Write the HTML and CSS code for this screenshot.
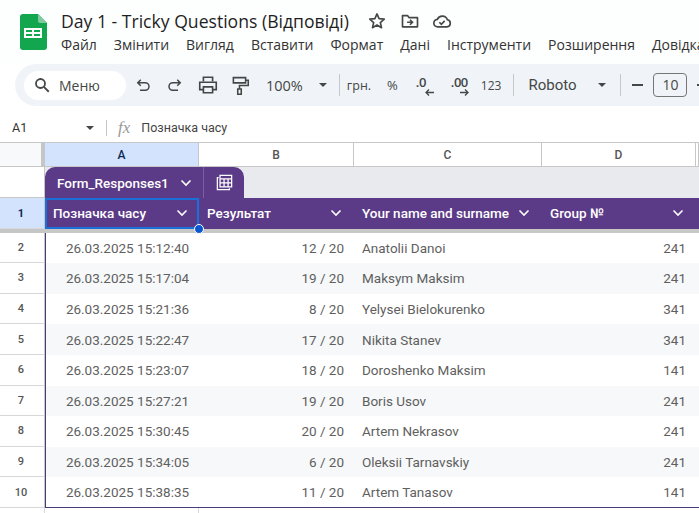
FILE: index.html
```html
<!DOCTYPE HTML>
<html lang="en">
<head>
    <title>Day 1 - Tricky Questions</title>
    <meta charset="utf-8">
    <link rel="stylesheet" href="styles.css">
</head>
<body>

<div class="top">
    <svg class="logo" width="27" height="36" viewBox="0 0 27 36">
        <path d="M3 0H18L27 9V33a3 3 0 0 1-3 3H3a3 3 0 0 1-3-3V3a3 3 0 0 1 3-3z" fill="#12a64f"/>
        <path d="M18 0L27 9H20a2 2 0 0 1-2-2z" fill="#7fcb9d"/>
        <path d="M4 14H22V24H4z M6 16V18H12V16z M14 16V18H20V16z M6 20V22H12V20z M14 20V22H20V20z" fill="#fff" fill-rule="evenodd"/>
    </svg>
    <div class="titles">
        <div class="title-row">
            <span class="doc-title">Day 1 - Tricky Questions (Відповіді)</span>
            <svg class="ti" width="20" height="20" viewBox="0 0 24 24"><path d="M12 3.500l2.500 5.700 6.200.6-4.700 4.100 1.400 6.100L12 16.800 6.600 20l1.400-6.100-4.700-4.100 6.200-.6z" fill="none" stroke="#444746" stroke-width="2" stroke-linejoin="round"/></svg>
            <svg class="ti folder" width="20" height="20" viewBox="0 0 24 24"><path d="M3 5.500h6l2 2.500h10v11H3z" fill="none" stroke="#444746" stroke-width="2" stroke-linejoin="round"/><path d="M8.500 13.500h6.500M12 10.500l3 3-3 3" fill="none" stroke="#444746" stroke-width="2"/></svg>
            <svg class="ti cloud" width="20" height="20" viewBox="0 0 24 24"><path d="M7 19a4.500 4.500 0 0 1-.6-9A6.500 6.500 0 0 1 18.500 10.500 4.300 4.300 0 0 1 18 19z" fill="none" stroke="#444746" stroke-width="2"/><path d="M8.800 13.500l2.400 2.400 4-4" fill="none" stroke="#444746" stroke-width="2"/></svg>
        </div>
        <div class="menu">
            <span>Файл</span><span>Змінити</span><span>Вигляд</span><span>Вставити</span><span>Формат</span><span>Дані</span><span>Інструменти</span><span>Розширення</span><span>Довідка</span>
        </div>
    </div>
</div>

<div class="toolbar">
    <div class="search">
        <svg width="18" height="18" viewBox="0 0 24 24"><circle cx="10" cy="10" r="6" fill="none" stroke="#444746" stroke-width="2.400"/><path d="M14.500 14.500L21 21" stroke="#444746" stroke-width="2.400"/></svg>
        <span>Меню</span>
    </div>
    <svg class="tool undo" width="18" height="18" viewBox="0 0 24 24"><path d="M9 5L5 9l4 4M5 9h10a4.500 4.500 0 0 1 0 10H8" fill="none" stroke="#444746" stroke-width="2"/></svg>
    <svg class="tool" width="18" height="18" viewBox="0 0 24 24"><path d="M15 5l4 4-4 4M19 9H9a4.500 4.500 0 0 0 0 10h7" fill="none" stroke="#444746" stroke-width="2"/></svg>
    <svg class="tool print" width="22" height="22" viewBox="0 0 24 24"><path d="M7 8V3.500h10V8M7 17H3V9h18v8h-4M7 14h10v6.500H7z" fill="none" stroke="#444746" stroke-width="1.800"/></svg>
    <svg class="tool paint" width="21" height="21" viewBox="0 0 24 24"><path d="M5 3h14v6H5zM19 6h3v6H12v4M10 16h4v6h-4z" fill="none" stroke="#444746" stroke-width="1.800"/></svg>
    <span class="zoom-val">100%</span>
    <span class="caret zoom-caret"></span>
    <span class="sep"></span>
    <span class="t-small grn">грн.</span>
    <span class="t-small pct">%</span>
    <span class="dec">.0<svg width="9" height="7" viewBox="0 0 9 7"><path d="M9 3.500H1M4 .5L1 3.500l3 3" fill="none" stroke="#444746" stroke-width="1.300"/></svg></span>
    <span class="dec inc">.00<svg width="9" height="7" viewBox="0 0 9 7"><path d="M0 3.500H8M5 .5l3 3-3 3" fill="none" stroke="#444746" stroke-width="1.300"/></svg></span>
    <span class="t-small num">123</span>
    <span class="sep"></span>
    <span class="font-name">Roboto</span>
    <span class="caret"></span>
    <span class="sep sep-wide"></span>
    <span class="minus"></span>
    <span class="size">10</span>
    <span class="minus plus"></span>
</div>

<div class="formula">
    <span class="cell-ref">A1</span>
    <span class="caret"></span>
    <span class="sep"></span>
    <span class="fx">fx</span>
    <span class="formula-text">Позначка часу</span>
</div>

<div class="sheet">
    <div class="col-head corner"></div>
    <div class="col-head active">A</div>
    <div class="col-head">B</div>
    <div class="col-head">C</div>
    <div class="col-head">D</div>
    <div class="col-head"></div>

    <div class="row-num blank"></div>
    <div class="tab-row">
        <div class="tab">
            <span class="tab-name">Form_Responses1</span>
            <svg class="chev" width="12" height="8" viewBox="0 0 12 8"><path d="M1.500 1.500L6 6l4.500-4.500" fill="none" stroke="#fff" stroke-width="1.600"/></svg>
            <span class="tab-line"></span>
            <svg width="17" height="17" viewBox="0 0 19 19"><path d="M3 4H1.500v13.500H15V16" fill="none" stroke="#fff" stroke-width="1.400"/><path d="M4.500 1.500h13v13h-13zM4.500 5.500h13M9 5.500v9M13.500 5.500v9M4.500 10h13" fill="none" stroke="#fff" stroke-width="1.400"/></svg>
        </div>
    </div>

    <div class="row-num active head-num">1</div>
    <div class="hcell selected"><span>Позначка часу</span><svg class="chev" width="12" height="8" viewBox="0 0 12 8"><path d="M1.500 1.500L6 6l4.500-4.500" fill="none" stroke="#fff" stroke-width="1.600"/></svg><i class="handle"></i></div>
    <div class="hcell"><span>Результат</span><svg class="chev" width="12" height="8" viewBox="0 0 12 8"><path d="M1.500 1.500L6 6l4.500-4.500" fill="none" stroke="#fff" stroke-width="1.600"/></svg></div>
    <div class="hcell"><span>Your name and surname</span><svg class="chev" width="12" height="8" viewBox="0 0 12 8"><path d="M1.500 1.500L6 6l4.500-4.500" fill="none" stroke="#fff" stroke-width="1.600"/></svg></div>
    <div class="hcell"><span>Group №</span><svg class="chev" width="12" height="8" viewBox="0 0 12 8"><path d="M1.500 1.500L6 6l4.500-4.500" fill="none" stroke="#fff" stroke-width="1.600"/></svg></div>
    <div class="hcell end"></div>

    <div class="row-num gap"></div>
    <div class="band"></div>

    <div class="row-num">2</div><div class="c t first">26.03.2025 15:12:40</div><div class="c r">12 / 20</div><div class="c n">Anatolii Danoi</div><div class="c r">241</div><div class="c e"></div>
    <div class="row-num">3</div><div class="c t first alt">26.03.2025 15:17:04</div><div class="c r alt">19 / 20</div><div class="c n alt">Maksym Maksim</div><div class="c r alt">241</div><div class="c e alt"></div>
    <div class="row-num">4</div><div class="c t first">26.03.2025 15:21:36</div><div class="c r">8 / 20</div><div class="c n">Yelysei Bielokurenko</div><div class="c r">341</div><div class="c e"></div>
    <div class="row-num">5</div><div class="c t first alt">26.03.2025 15:22:47</div><div class="c r alt">17 / 20</div><div class="c n alt">Nikita Stanev</div><div class="c r alt">341</div><div class="c e alt"></div>
    <div class="row-num">6</div><div class="c t first">26.03.2025 15:23:07</div><div class="c r">18 / 20</div><div class="c n">Doroshenko Maksim</div><div class="c r">141</div><div class="c e"></div>
    <div class="row-num">7</div><div class="c t first alt">26.03.2025 15:27:21</div><div class="c r alt">19 / 20</div><div class="c n alt">Boris Usov</div><div class="c r alt">241</div><div class="c e alt"></div>
    <div class="row-num">8</div><div class="c t first">26.03.2025 15:30:45</div><div class="c r">20 / 20</div><div class="c n">Artem Nekrasov</div><div class="c r">241</div><div class="c e"></div>
    <div class="row-num">9</div><div class="c t first alt">26.03.2025 15:34:05</div><div class="c r alt">6 / 20</div><div class="c n alt">Oleksii Tarnavskiy</div><div class="c r alt">241</div><div class="c e alt"></div>
    <div class="row-num">10</div><div class="c t first last">26.03.2025 15:38:35</div><div class="c r last">11 / 20</div><div class="c n last">Artem Tanasov</div><div class="c r last">141</div><div class="c e last"></div>

    <div class="tail"></div><div class="tail"></div>
</div>

</body>
</html>
```

FILE: styles.css
```css
html {
    height: 100%;
}
body {
    margin: 0;
    padding: 0;
    height: 513px;
    overflow: hidden;
    background: #fff;
    color: #444;
    font-family: "Roboto", sans-serif;
    font-size: 13px;
}

.top {
    display: flex;
    height: 64px;
    padding-left: 20px;
    box-sizing: border-box;
    background: #fdfefe;
    white-space: nowrap;
}
.logo {
    flex: none;
    margin-top: 14px;
}
.titles {
    flex: none;
    margin-left: 14px;
    padding-top: 8px;
}
.title-row {
    display: flex;
    align-items: center;
    height: 26px;
}
.doc-title {
    font-family: "Open Sans", sans-serif;
    font-size: 17.600px;
    color: #1f1f1f;
    margin-right: 8px;
}
.ti {
    margin-left: 10px;
}
.ti.folder {
    margin-left: 13px;
}
.ti.cloud {
    margin-left: 12px;
}
.menu {
    display: flex;
    gap: 17px;
    margin-top: 1px;
    font-family: "Open Sans", sans-serif;
    font-size: 14px;
    line-height: 20px;
    color: #333;
}

.toolbar {
    display: flex;
    align-items: center;
    height: 42px;
    margin-left: 15px;
    padding-left: 9px;
    overflow: hidden;
    background: #f0f4f9;
    border-radius: 21px 0 0 21px;
    white-space: nowrap;
    font-family: "Open Sans", sans-serif;
    color: #444746;
}
.search {
    display: flex;
    flex: none;
    align-items: center;
    width: 102px;
    height: 29px;
    box-sizing: border-box;
    padding-left: 9px;
    gap: 8px;
    background: #fff;
    border-radius: 15px;
    font-size: 14px;
}
.tool {
    flex: none;
    margin-left: 14px;
}
.tool.undo {
    margin-left: 8px;
}
.tool.print {
    margin-left: 13px;
}
.tool.paint {
    margin-left: 10px;
}
.zoom-val {
    margin-left: 16px;
    font-size: 14.500px;
}
.caret {
    flex: none;
    width: 0;
    height: 0;
    margin-left: 10px;
    border-left: 4.500px solid transparent;
    border-right: 4.500px solid transparent;
    border-top: 4.500px solid #444746;
}
.zoom-caret {
    margin-left: 16px;
}
.sep {
    flex: none;
    width: 1px;
    height: 22px;
    margin-left: 12px;
    background: #c7c7c7;
}
.sep-wide {
    margin-left: 14px;
}
.t-small {
    font-size: 12.500px;
}
.grn {
    margin-left: 7px;
}
.pct {
    margin-left: 16px;
    font-size: 13px;
}
.dec {
    position: relative;
    flex: none;
    width: 24px;
    margin-left: 18px;
    font-size: 13px;
    font-weight: 600;
    line-height: 16px;
    padding-bottom: 6px;
    letter-spacing: -.5px;
}
.dec svg {
    position: absolute;
    left: 9px;
    bottom: 0;
}
.inc {
    margin-left: 11px;
}
.num {
    margin-left: 6px;
    font-size: 12px;
}
.font-name {
    flex: none;
    width: 60px;
    margin-left: 14px;
    font-family: "Roboto", sans-serif;
    font-size: 15px;
}
.minus {
    flex: none;
    width: 11px;
    height: 2px;
    margin-left: 11px;
    background: #444746;
}
.plus {
    margin-left: 10px;
}
.size {
    flex: none;
    width: 34px;
    height: 24px;
    box-sizing: border-box;
    margin-left: 10px;
    border: 1px solid #747775;
    border-radius: 4px;
    text-align: center;
    font-size: 14px;
    line-height: 22px;
}

.formula {
    display: flex;
    align-items: center;
    height: 29px;
    margin-top: 7px;
    padding-left: 12px;
    box-sizing: border-box;
    background: #fff;
}
.cell-ref {
    width: 64px;
    font-size: 12.500px;
    color: #333;
}
.formula .sep {
    height: 16px;
}
.fx {
    margin-left: 11px;
    font-family: "Liberation Serif", serif;
    font-style: italic;
    font-size: 17px;
    color: #999;
}
.formula-text {
    margin-left: 11px;
    font-size: 12.500px;
    color: #444;
}

.sheet {
    display: grid;
    grid-template-columns: 45px 154px 155px 188px 154px 3px;
    grid-template-rows: 25px 31px 31px 3.600px repeat(9, 30.600px) 5px;
}
.col-head {
    display: flex;
    align-items: center;
    justify-content: center;
    box-sizing: border-box;
    border-top: 1px solid #c7c7c7;
    border-bottom: 1px solid #c7c7c7;
    border-right: 1px solid #c7c7c7;
    font-size: 12px;
    font-weight: 500;
    color: #555;
    background: #fff;
}
.col-head.corner {
    background: #f8f9fa;
    border-right: 4px solid #c4c7c5;
}
.col-head.active {
    background: #d3e3fd;
    color: #0b2b55;
}
.row-num {
    display: flex;
    align-items: center;
    justify-content: center;
    box-sizing: border-box;
    padding-right: 2px;
    border-bottom: 1px solid #d8d8d8;
    border-right: 1px solid #c7c7c7;
    font-size: 11px;
    font-weight: 500;
    color: #555;
}
.row-num.blank {
    border-bottom: 1px solid #c7c7c7;
}
.row-num.active {
    background: #d3e3fd;
    color: #0b2b55;
    font-weight: 700;
}
.row-num.gap {
    background: #c4c7c5;
    border: 0;
}
.tail {
    box-sizing: border-box;
    border-right: 1px solid #d8d8d8;
}
.tab-row {
    grid-column: 2 / -1;
    background: #e9eaee;
    display: flex;
    align-items: flex-end;
}
.tab {
    display: flex;
    align-items: center;
    height: 31px;
    width: 199px;
    box-sizing: border-box;
    padding-left: 12px;
    background: #5b3a87;
    border-radius: 10px 10px 0 0;
    color: #fff;
}
.tab-name {
    width: 123px;
    font-size: 13.500px;
    font-weight: 500;
    white-space: nowrap;
}
.tab-line {
    width: 1px;
    height: 100%;
    margin: 0 12px 0 11px;
    background: #7a5fa3;
}
.hcell {
    position: relative;
    display: flex;
    align-items: center;
    justify-content: space-between;
    box-sizing: border-box;
    padding: 0 12px 2px 8px;
    background: #5b3a87;
    color: #fff;
    font-size: 13.500px;
    font-weight: 500;
    white-space: nowrap;
}
.hcell.selected {
    border: 2px solid #1a6fd8;
    padding: 0 9px 2px 6px;
}
.hcell.end {
    padding: 0;
}
.handle {
    position: absolute;
    right: -7px;
    bottom: -7px;
    z-index: 2;
    width: 8px;
    height: 8px;
    background: #0b57d0;
    border: 1px solid #fff;
    border-radius: 50%;
}
.band {
    grid-column: 2 / -1;
    background: #c8c8c6;
}
.c {
    display: flex;
    align-items: center;
    box-sizing: border-box;
    font-size: 13.500px;
    color: #5f5f5f;
    white-space: nowrap;
}
.alt {
    background: #f6f8f9;
}
.first {
    border-left: 1px solid #4a3c78;
}
.t {
    justify-content: center;
    padding-left: 10px;
}
.r {
    justify-content: flex-end;
    padding-right: 10px;
}
.n {
    padding-left: 8px;
}
.c.last {
    border-bottom: 1px solid #4a3c78;
}
```
